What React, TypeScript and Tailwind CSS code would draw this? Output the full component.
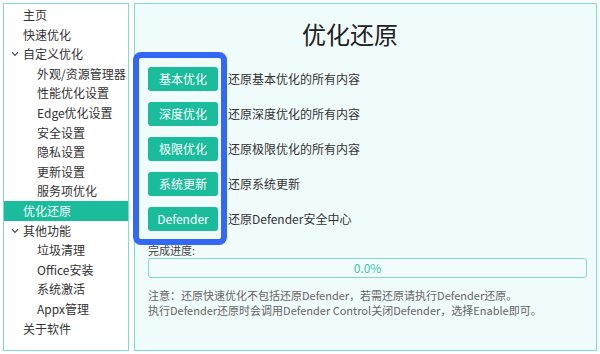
import React from "react";

const font = { fontFamily: '"Noto Sans CJK SC", "Noto Sans", sans-serif' };

function Chevron() {
  return (
    <svg width="8" height="6" viewBox="0 0 8 6" className="absolute left-[7px] top-[7px]">
      <path d="M1 1.2 L4 4.4 L7 1.2" fill="none" stroke="#444" strokeWidth="1.1" />
    </svg>
  );
}

type Item = { label: string; level: number; chevron?: boolean; active?: boolean };

const items: Item[] = [
  { label: "主页", level: 0 },
  { label: "快速优化", level: 0 },
  { label: "自定义优化", level: 0, chevron: true },
  { label: "外观/资源管理器", level: 1 },
  { label: "性能优化设置", level: 1 },
  { label: "Edge优化设置", level: 1 },
  { label: "安全设置", level: 1 },
  { label: "隐私设置", level: 1 },
  { label: "更新设置", level: 1 },
  { label: "服务项优化", level: 1 },
  { label: "优化还原", level: 0, active: true },
  { label: "其他功能", level: 0, chevron: true },
  { label: "垃圾清理", level: 1 },
  { label: "Office安装", level: 1 },
  { label: "系统激活", level: 1 },
  { label: "Appx管理", level: 1 },
  { label: "关于软件", level: 0 },
];

const rows = [
  { btn: "基本优化", desc: "还原基本优化的所有内容" },
  { btn: "深度优化", desc: "还原深度优化的所有内容" },
  { btn: "极限优化", desc: "还原极限优化的所有内容" },
  { btn: "系统更新", desc: "还原系统更新" },
  { btn: "Defender", desc: "还原Defender安全中心" },
];

export default function App() {
  return (
    <div className="relative w-[600px] h-[354px] bg-white flex p-[3px] gap-[5px] overflow-hidden" style={font}>
      <div className="w-[126px] h-full border border-[#7fdad1] bg-white pt-[1px] text-[12px] text-[#333]">
        {items.map((it) => (
          <div
            key={it.label}
            className={
              "relative h-[19.6px] leading-[19.6px] whitespace-nowrap " +
              (it.level === 0 ? "pl-[19px] " : "pl-[33px] ") +
              (it.active ? "bg-[#1abc9c] text-white" : "")
            }
          >
            {it.chevron && <Chevron />}
            {it.label}
          </div>
        ))}
      </div>
      <div className="flex-1 h-full border border-[#7fdad1] bg-[#f0fbfb] pt-[13px] pl-[13px] pr-[9px] flex flex-col">
        <div className="h-[34px] leading-[34px] text-[24px] text-[#222] text-center pr-[35px]">优化还原</div>
        <div className="mt-[16px] flex flex-col gap-[11px]">
          {rows.map((r) => (
            <div key={r.btn} className="flex items-center h-[24px]">
              <div className="w-[70px] h-[24px] rounded-[3px] bg-[#1abc9c] text-white text-[12px] leading-[24px] text-center">
                {r.btn}
              </div>
              <div className="ml-[10px] text-[12px] text-[#333] leading-[24px]">{r.desc}</div>
            </div>
          ))}
        </div>
        <div className="mt-[11px] text-[11px] leading-[16px] text-[#444]">完成进度:</div>
        <div className="h-[20px] border border-[#7fdad1] rounded-[3px] bg-[#f3fcfc] text-center text-[12px] leading-[18px] text-[#3cc4b0]">
          0.0%
        </div>
        <div className="mt-[10px] text-[11px] leading-[15px] text-[#666]">
          <div>注意：还原快速优化不包括还原Defender，若需还原请执行Defender还原。</div>
          <div>执行Defender还原时会调用Defender Control关闭Defender，选择Enable即可。</div>
        </div>
      </div>
      <div className="absolute left-[133px] top-[52px] w-[94px] h-[193px] border-[6px] border-[#3367f5] rounded-[8px] pointer-events-none" />
    </div>
  );
}
